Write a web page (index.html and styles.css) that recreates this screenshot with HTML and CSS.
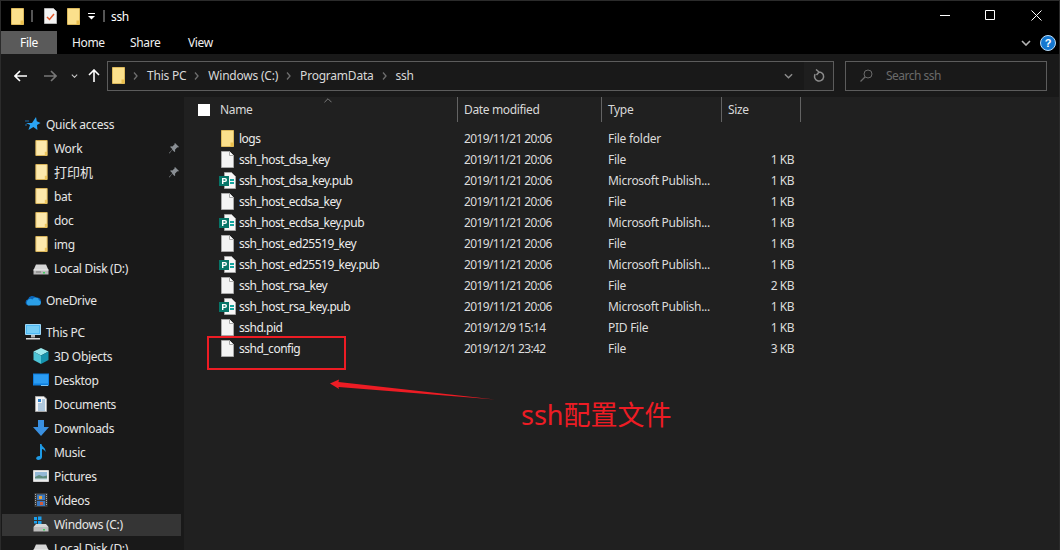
FILE: index.html
```html
<!DOCTYPE html>
<html lang="en">
<head>
<meta charset="utf-8">
<title>ssh</title>
<link rel="stylesheet" href="styles.css">
</head>
<body>
<svg class="defs" xmlns="http://www.w3.org/2000/svg">
  <symbol id="folder-s" viewBox="0 0 13 17"><path d="M.5.5h12v16H.5z" fill="#fbe08c" stroke="#dcb95c"/><path d="M9.500 12.500h3v4h-3z" fill="#eabf4d"/></symbol>
  <symbol id="folder-p" viewBox="0 0 13 17"><path d="M.5.5h12v16H.5z" fill="#fde9ac" stroke="#e0b95a"/><path d="M10 12.500h2.500v4H10z" fill="#edc65e"/></symbol>
  <symbol id="page" viewBox="0 0 13 17"><path d="M.5.5h8l4 4v12H.5z" fill="#f4f4f4" stroke="#a9a9a9"/><path d="M8.500.5v4h4" fill="#fff" stroke="#a9a9a9"/></symbol>
  <symbol id="pub" viewBox="0 0 17 17"><path d="M5.500.5h7l4 4v12h-11z" fill="#f6f6f6" stroke="#a5a5a5"/><path d="M11 7h4v2h-4zM11 10h4v2h-4z" fill="#15a5a0"/><rect y="4" width="10" height="10" fill="#077568"/><path d="M3 6h3a2 2 0 0 1 0 4H4.400v2H3z M4.400 7.200v1.600H5.800a.8.8 0 0 0 0-1.600z" fill="#fff"/></symbol>
  <symbol id="check" viewBox="0 0 13 16"><path d="M.5.5h9l3 3v12H.5z" fill="#f3f3f3" stroke="#b5b5b5"/><path d="M3 9l2.500 2.500L10 6" fill="none" stroke="#e2582a" stroke-width="1.500"/></symbol>
  <symbol id="star" viewBox="0 0 16 16"><path d="M11 1l.8 4.300L15.500 7l-3.500 2 .4 5-4-3-5 3 1.700-5L1 7h6z" fill="#2aa4f4"/><path d="M0 5h4M0 9h2" stroke="#1b6fb0"/></symbol>
  <symbol id="hdd" viewBox="0 0 16 16"><path d="M3 4.500h10L15.500 10H.5z" fill="#d6d6d6"/><path d="M.5 10h15v4.500H.5z" fill="#b9b9b9"/><path d="M.5 10h15" stroke="#eee"/><path d="M10 12h2v1.500h-2z" fill="#3fce5f"/><path d="M3 12h5" stroke="#777"/></symbol>
  <symbol id="cloud" viewBox="0 0 16 16"><path d="M3.500 13.500A3.200 3.200 0 0 1 3 7.200 4.500 4.500 0 0 1 11 5.800a3.800 3.800 0 0 1 5 3.700v.5z" fill="#0a64b8"/><path d="M3.500 13.500h9.800a2.700 2.700 0 0 0 .7-5.300 3.500 3.500 0 0 0-6.500-.7A3 3 0 0 0 3.500 13.500z" fill="#2b9fe6"/></symbol>
  <symbol id="pc" viewBox="0 0 16 16"><path d="M.5 .5h15v10H.5z" fill="#4fb8f2" stroke="#9fd8f7"/><path d="M2 2h12v7H2z" fill="#76cdf6"/><path d="M6 11h4v2.500H6z" fill="#b8b8b8"/><path d="M1 14h14v1.500H1z" fill="#d8d8d8"/></symbol>
  <symbol id="cube" viewBox="0 0 16 16"><path d="M8 0l7.500 3.500L8 7.500.5 3.500z" fill="#9be9ee"/><path d="M.5 3.500L8 7.500V16L.5 12z" fill="#4dc4d6"/><path d="M15.500 3.500L8 7.500V16l7.500-4z" fill="#1593ad"/></symbol>
  <symbol id="desk" viewBox="0 0 16 16"><path d="M0 1.500h16v12H0z" fill="#0f7ede"/><path d="M1 2.500h14v9H1z" fill="#2b9cf2"/><path d="M8 13h7v1H8z" fill="#7cc6f7"/></symbol>
  <symbol id="docs" viewBox="0 0 16 16"><path d="M2.500.5h8.500l2.500 2.500v12.500h-11z" fill="#f5f5f5" stroke="#a8a8a8"/><path d="M5 3h3v3H5z" fill="#2f80c8"/><path d="M9 4h3M9 6h3M5 8h7M5 10h7M5 12h7M5 14h7" stroke="#6b9cc8"/></symbol>
  <symbol id="down" viewBox="0 0 16 16"><path d="M5 0h6v7h5l-8 9-8-9h5z" fill="#3a90e0"/></symbol>
  <symbol id="music" viewBox="0 0 16 16"><path d="M7 0h1.500c.3 3 4.500 3.500 4 8-.8-2-2.500-3-3.500-3v8c0 2-2 3-4 3s-2.500-2-1-3.200c1-.8 2.200-.9 3-.6z" fill="#1e9be6"/></symbol>
  <symbol id="pics" viewBox="0 0 16 16"><path d="M.5 2.500h15v11H.5z" fill="#ededed" stroke="#cfcfcf"/><path d="M2 4h12v8H2z" fill="#93b8d6"/><path d="M2 9l4-2 4 1.500 4-1V12H2z" fill="#5d8a7c"/><path d="M2 10.500h12V12H2z" fill="#cfe0e8"/></symbol>
  <symbol id="vids" viewBox="0 0 16 16"><path d="M1.500 1h13v14h-13z" fill="#3c3c3c"/><path d="M4 2.500h8V8H4z" fill="#3b78c0"/><path d="M4 9h8v5H4z" fill="#3b78c0"/><path d="M6 4h3v3H6z" fill="#e6a23a"/><path d="M7 10h3v3H7z" fill="#d25a3a"/><path d="M2.500 2v12M13.500 2v12" stroke="#aaa" stroke-dasharray="1 1"/></symbol>
  <symbol id="win" viewBox="0 0 16 16"><path d="M3 8h10l2.500 3H.5z" fill="#d6d6d6"/><path d="M.5 11h15v4.500H.5z" fill="#bdbdbd"/><path d="M10 13h2v1.500h-2z" fill="#3fce5f"/><path d="M1 1h3v3H1zM5 .5h3.500v3.500H5zM1 5h3v2.500H1zM5 5h3.500v3H5z" fill="#1aa0ee"/></symbol>
  <symbol id="pin" viewBox="0 0 10 11"><path d="M6 0l4 4-1 .6-.7-.3L6 6.800 6.200 8.500 5.500 9 3.200 6.800.5 10.500 0 10l3.400-3.800L1.200 4l.6-.7 1.600.2L5.700 1.200 5.500.6z" fill="#8a8f94"/></symbol>
  <symbol id="chev" viewBox="0 0 10 6"><path d="M1 1l4 4 4-4" fill="none" stroke="currentColor" stroke-width="1.600"/></symbol>
  <symbol id="crumb" viewBox="0 0 5 8"><path d="M1 .5L4 4 1 7.500" fill="none" stroke="#6e6e6e" stroke-width="1.300"/></symbol>
</svg>

<div class="window">
  <header class="titlebar">
    <svg class="ic-title"><use href="#folder-s"/></svg>
    <span class="tsep"></span>
    <svg class="ic-check"><use href="#check"/></svg>
    <svg class="ic-title ic-title2"><use href="#folder-s"/></svg>
    <svg class="qat" viewBox="0 0 7 7"><path d="M0 .5h7" stroke="#fff"/><path d="M0 3h7L3.500 6.500z" fill="#fff"/></svg>
    <span class="tsep tsep2"></span>
    <span class="ttext">ssh</span>
    <div class="winctl">
      <svg class="ctl" viewBox="0 0 11 11"><path d="M1 5.500h10" stroke="#fff"/></svg>
      <svg class="ctl" viewBox="0 0 11 11"><path d="M.5.5h9v9h-9z" fill="none" stroke="#fff"/></svg>
      <svg class="ctl" viewBox="0 0 11 11"><path d="M.5.5l10 10M10.500.5l-10 10" stroke="#fff"/></svg>
    </div>
  </header>

  <nav class="ribbon">
    <span class="tab tab-file">File</span>
    <span class="tab">Home</span>
    <span class="tab">Share</span>
    <span class="tab">View</span>
    <svg class="rib-chev"><use href="#chev"/></svg>
    <svg class="help" viewBox="0 0 16 16"><circle cx="8" cy="8" r="7.500" fill="#1477d0" stroke="#bcdcf5"/><text x="8" y="12" class="help-q">?</text></svg>
  </nav>

  <div class="toolbar">
    <svg class="nav nav-back" viewBox="0 0 13 12"><path d="M6 1L1 6l5 5M1 6h12" fill="none" stroke="#fff" stroke-width="1.600"/></svg>
    <svg class="nav nav-fwd" viewBox="0 0 13 12"><path d="M7 1l5 5-5 5M12 6H0" fill="none" stroke="#777" stroke-width="1.600"/></svg>
    <svg class="nav-drop"><use href="#chev"/></svg>
    <svg class="nav nav-up" viewBox="0 0 12 13"><path d="M1 6l5-5 5 5M6 1v12" fill="none" stroke="#fff" stroke-width="1.600"/></svg>
    <div class="address">
      <svg class="ic-addr"><use href="#folder-s"/></svg>
      <svg class="crumb"><use href="#crumb"/></svg><span>This PC</span>
      <svg class="crumb"><use href="#crumb"/></svg><span>Windows (C:)</span>
      <svg class="crumb"><use href="#crumb"/></svg><span>ProgramData</span>
      <svg class="crumb"><use href="#crumb"/></svg><span>ssh</span>
      <svg class="addr-chev"><use href="#chev"/></svg>
      <div class="refresh">
        <svg viewBox="0 0 12 13" class="ref-ic"><path d="M6 3a4.500 4.500 0 1 1-3.800 2.200M3 .5L6 3 3.500 6" fill="none" stroke="#8c8c8c" stroke-width="1.500"/></svg>
      </div>
    </div>
    <div class="search">
      <svg class="search-ic" viewBox="0 0 13 13"><circle cx="8" cy="5" r="4" fill="none" stroke="#6a6a6a"/><path d="M5 8l-4.500 4.500" stroke="#6a6a6a" stroke-width="1.300"/></svg>
      <span>Search ssh</span>
    </div>
  </div>

  <div class="main">
    <aside class="sidebar">
      <div class="group">
        <div class="navrow"><svg class="ic16"><use href="#star"/></svg><span>Quick access</span></div>
        <div class="navrow sub"><svg class="ic-fold"><use href="#folder-p"/></svg><span>Work</span><svg class="pin"><use href="#pin"/></svg></div>
        <div class="navrow sub"><svg class="ic-fold"><use href="#folder-p"/></svg><span class="cjk">打印机</span><svg class="pin"><use href="#pin"/></svg></div>
        <div class="navrow sub"><svg class="ic-fold"><use href="#folder-p"/></svg><span>bat</span></div>
        <div class="navrow sub"><svg class="ic-fold"><use href="#folder-p"/></svg><span>doc</span></div>
        <div class="navrow sub"><svg class="ic-fold"><use href="#folder-p"/></svg><span>img</span></div>
        <div class="navrow sub"><svg class="ic16"><use href="#hdd"/></svg><span>Local Disk (D:)</span></div>
      </div>
      <div class="group">
        <div class="navrow"><svg class="ic16"><use href="#cloud"/></svg><span>OneDrive</span></div>
      </div>
      <div class="group">
        <div class="navrow"><svg class="ic16"><use href="#pc"/></svg><span>This PC</span></div>
        <div class="navrow sub"><svg class="ic16"><use href="#cube"/></svg><span>3D Objects</span></div>
        <div class="navrow sub"><svg class="ic16"><use href="#desk"/></svg><span>Desktop</span></div>
        <div class="navrow sub"><svg class="ic16"><use href="#docs"/></svg><span>Documents</span></div>
        <div class="navrow sub"><svg class="ic16"><use href="#down"/></svg><span>Downloads</span></div>
        <div class="navrow sub"><svg class="ic16"><use href="#music"/></svg><span>Music</span></div>
        <div class="navrow sub"><svg class="ic16"><use href="#pics"/></svg><span>Pictures</span></div>
        <div class="navrow sub"><svg class="ic16"><use href="#vids"/></svg><span>Videos</span></div>
        <div class="navrow sub selected"><svg class="ic16"><use href="#win"/></svg><span>Windows (C:)</span></div>
        <div class="navrow sub"><svg class="ic16"><use href="#hdd"/></svg><span>Local Disk (D:)</span></div>
      </div>
    </aside>

    <section class="content">
      <svg class="sort" viewBox="0 0 9 5"><path d="M.5 4.500l4-4 4 4" fill="none" stroke="#8a8a8a"/></svg>
      <div class="cols head">
        <div class="hname"><span class="checkbox"></span><span>Name</span></div>
        <div class="hcell">Date modified</div>
        <div class="hcell">Type</div>
        <div class="hcell">Size</div>
      </div>
      <div class="list">
        <div class="cols row"><div class="fname"><svg class="ic-file"><use href="#folder-s"/></svg><span>logs</span></div><div>2019/11/21 20:06</div><div>File folder</div><div class="size"></div></div>
        <div class="cols row"><div class="fname"><svg class="ic-file"><use href="#page"/></svg><span>ssh_host_dsa_key</span></div><div>2019/11/21 20:06</div><div>File</div><div class="size">1 KB</div></div>
        <div class="cols row"><div class="fname"><svg class="ic-pub"><use href="#pub"/></svg><span>ssh_host_dsa_key.pub</span></div><div>2019/11/21 20:06</div><div>Microsoft Publish...</div><div class="size">1 KB</div></div>
        <div class="cols row"><div class="fname"><svg class="ic-file"><use href="#page"/></svg><span>ssh_host_ecdsa_key</span></div><div>2019/11/21 20:06</div><div>File</div><div class="size">1 KB</div></div>
        <div class="cols row"><div class="fname"><svg class="ic-pub"><use href="#pub"/></svg><span>ssh_host_ecdsa_key.pub</span></div><div>2019/11/21 20:06</div><div>Microsoft Publish...</div><div class="size">1 KB</div></div>
        <div class="cols row"><div class="fname"><svg class="ic-file"><use href="#page"/></svg><span>ssh_host_ed25519_key</span></div><div>2019/11/21 20:06</div><div>File</div><div class="size">1 KB</div></div>
        <div class="cols row"><div class="fname"><svg class="ic-pub"><use href="#pub"/></svg><span>ssh_host_ed25519_key.pub</span></div><div>2019/11/21 20:06</div><div>Microsoft Publish...</div><div class="size">1 KB</div></div>
        <div class="cols row"><div class="fname"><svg class="ic-file"><use href="#page"/></svg><span>ssh_host_rsa_key</span></div><div>2019/11/21 20:06</div><div>File</div><div class="size">2 KB</div></div>
        <div class="cols row"><div class="fname"><svg class="ic-pub"><use href="#pub"/></svg><span>ssh_host_rsa_key.pub</span></div><div>2019/11/21 20:06</div><div>Microsoft Publish...</div><div class="size">1 KB</div></div>
        <div class="cols row"><div class="fname"><svg class="ic-file"><use href="#page"/></svg><span>sshd.pid</span></div><div>2019/12/9 15:14</div><div>PID File</div><div class="size">1 KB</div></div>
        <div class="cols row"><div class="fname"><svg class="ic-file"><use href="#page"/></svg><span>sshd_config</span></div><div>2019/12/1 23:42</div><div>File</div><div class="size">3 KB</div></div>
      </div>
    </section>
  </div>

  <div class="note-box"></div>
  <svg class="note-arrow" viewBox="0 0 170 22"><polygon points="0,4.500 9,0.500 8.500,3 165,20.500 8.500,8 9,10" fill="#ed1c24"/></svg>
  <div class="note-text">ssh配置文件</div>
</div>
</body>
</html>
```

FILE: styles.css
```css
* { box-sizing: border-box; }
html, body { margin: 0; padding: 0; }
body {
  width: 1060px;
  height: 550px;
  overflow: hidden;
  background: #000;
  font-family: "Noto Sans", "Noto Sans CJK SC", sans-serif;
  font-size: 12px;
  letter-spacing: -0.35px;
  color: #e6e6e6;
}
.defs { display: none; }
.window {
  position: relative;
  width: 1060px;
  height: 550px;
  display: flex;
  flex-direction: column;
  overflow: hidden;
  border-top: 1px solid #2b2b2b;
  border-left: 1px solid #2b2b2b;
  border-right: 1px solid #2b2b2b;
}

/* title bar */
.titlebar {
  height: 30px;
  flex: none;
  background: #000;
  display: flex;
  align-items: center;
  padding-left: 10px;
  color: #fff;
}
.ic-title { width: 13px; height: 17px; flex: none; }
.ic-title2 { margin-left: 10px; }
.ic-check { width: 13px; height: 16px; margin-left: 11px; flex: none; }
.tsep { width: 2px; height: 12px; background: #555; margin-left: 7px; flex: none; }
.tsep2 { margin-left: 8px; }
.qat { width: 7px; height: 7px; margin-left: 8px; flex: none; }
.ttext { margin-left: 6px; }
.winctl { margin-left: auto; margin-bottom: 2px; display: flex; align-items: center; gap: 35px; padding-right: 17px; }
.ctl { width: 11px; height: 11px; display: block; }

/* ribbon tabs */
.ribbon {
  height: 23px;
  flex: none;
  background: #000;
  display: flex;
  align-items: center;
  color: #f0f0f0;
}
.tab { width: 58px; padding-left: 15px; line-height: 23px; flex: none; }
.tab-file { width: 56px; padding: 0; text-align: center; background: #5a5a5a; color: #fff; }
.rib-chev { width: 10px; height: 6px; color: #b5b5b5; margin-left: auto; flex: none; }
.help { width: 16px; height: 16px; margin: 0 3px 0 9px; flex: none; }
.help-q { font: bold 11px "Liberation Sans", sans-serif; fill: #fff; text-anchor: middle; }

/* address row */
.toolbar {
  height: 43px;
  flex: none;
  background: #191919;
  display: flex;
  align-items: center;
  padding: 0 13px;
}
.nav { flex: none; display: block; }
.nav-back { width: 13px; height: 12px; }
.nav-fwd { width: 13px; height: 12px; margin-left: 17px; }
.nav-drop { width: 7px; height: 4px; color: #c8c8c8; margin-left: 14px; flex: none; }
.nav-up { width: 12px; height: 13px; margin-left: 10px; }
.address {
  width: 727px;
  height: 30px;
  margin-left: 7px;
  flex: none;
  border: 1px solid #5c5c5c;
  display: flex;
  align-items: center;
  padding-left: 4px;
  color: #d8d8d8;
  letter-spacing: -0.22px;
}
.ic-addr { width: 13px; height: 17px; flex: none; }
.crumb { width: 5px; height: 8px; margin: 0 9px 0 8px; flex: none; }
.addr-chev { width: 9px; height: 6px; color: #8c8c8c; margin-left: auto; flex: none; }
.refresh {
  width: 29px;
  height: 28px;
  margin-left: 11px;
  background: #1e1e1e;
  display: flex;
  align-items: center;
  justify-content: center;
  flex: none;
}
.ref-ic { width: 12px; height: 13px; }
.search {
  width: 202px;
  height: 30px;
  margin-left: 11px;
  flex: none;
  border: 1px solid #5c5c5c;
  display: flex;
  align-items: center;
  padding-left: 14px;
  color: #6a6a6a;
  letter-spacing: -0.5px;
}
.search-ic { width: 13px; height: 13px; margin-right: 13px; flex: none; }

/* main split */
.main { flex: 1; display: flex; min-height: 0; }
.sidebar { width: 183px; flex: none; background: #191919; padding-top: 15px; letter-spacing: -0.3px; }
.group { margin-bottom: 8px; }
.navrow {
  height: 24px;
  display: flex;
  align-items: center;
  padding-left: 24px;
  color: #e6e6e6;
}
.navrow > span { margin-left: 5px; }
.navrow > .cjk { font-size: 13px; letter-spacing: 0; margin-bottom: 2px; }
.navrow.sub { padding-left: 32px; }
.navrow.selected {
  background: linear-gradient(to bottom, transparent 2px, #353535 2px);
  margin-left: 1px;
  margin-right: 3px;
  padding-left: 31px;
}
.ic16 { width: 16px; height: 16px; flex: none; }
.ic-fold { width: 13px; height: 16px; margin-left: 2px; margin-right: 1px; flex: none; }
.pin { width: 10px; height: 11px; margin-left: auto; margin-right: 5px; flex: none; }

/* file list */
.content { position: relative; flex: 1; background: #202020; min-width: 0; }
.cols { display: grid; grid-template-columns: 273px 144px 120px 80px; }
.head { height: 25px; color: #d8d8d8; }
.hcell { border-left: 1px solid #636363; padding-left: 6px; line-height: 25px; }
.hcell:last-child { border-right: 1px solid #636363; }
.hname { display: flex; align-items: center; padding-left: 14px; }
.checkbox { width: 12px; height: 12px; background: #fff; margin-right: 10px; flex: none; }
.sort { position: absolute; left: 140px; top: 1px; width: 8px; height: 5px; }
.list { padding-top: 6px; }
.row { height: 21px; line-height: 21px; color: #dcdcdc; }
.row > div { padding-left: 7px; }
.row > div:nth-child(2) { letter-spacing: -0.62px; }
.row > div:nth-child(3) { letter-spacing: -0.27px; }
.fname { display: flex; align-items: center; color: #ececec; letter-spacing: -0.5px; }
.row > .fname { padding-left: 35px; }
.fname span { margin-left: 5px; }
.row > .size { padding: 0 7px 0 0; text-align: right; letter-spacing: -0.5px; }
.ic-file { width: 13px; height: 17px; margin-left: 2px; flex: none; }
.ic-pub { width: 17px; height: 17px; margin-right: -2px; flex: none; }

/* red annotations drawn over the window */
.note-box { position: absolute; left: 206px; top: 335px; width: 139px; height: 34px; border: 2px solid #ed1c24; }
.note-arrow { position: absolute; left: 329px; top: 378px; width: 170px; height: 22px; }
.note-text { position: absolute; left: 520px; top: 396px; font-size: 27px; line-height: 36px; color: #ed1c24; white-space: nowrap; letter-spacing: 0; }
```
